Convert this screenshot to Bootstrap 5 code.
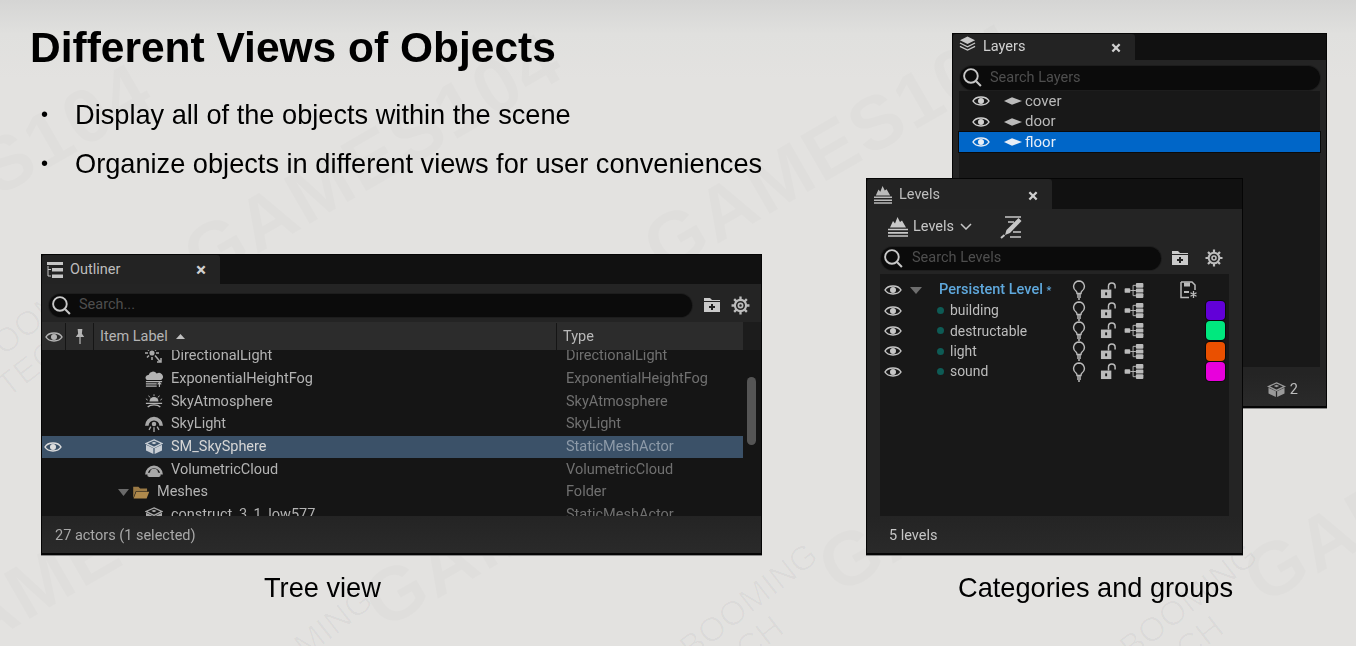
<!DOCTYPE html>
<html lang="en"><head><meta charset="utf-8"><title>Different Views of Objects</title>
<link rel="stylesheet" href="https://cdn.jsdelivr.net/npm/bootstrap@5.3.0/dist/css/bootstrap.min.css">
<style>
html,body{margin:0;height:100%;overflow:hidden}
body{background:#e3e2e0}
.slide{position:relative;width:1356px;height:646px;overflow:hidden;background:linear-gradient(#d5d5d4 0,#e0e0de 34px,#e3e2e0 80px);font-family:"Liberation Sans",Arial,sans-serif;color:#000}
.wm{position:absolute;font-weight:700;font-size:76px;line-height:1;color:rgba(0,0,0,.017);transform:rotate(-30deg);transform-origin:left center;white-space:nowrap;letter-spacing:2px}
.wm2{font-weight:400;font-size:34px;line-height:1.05;transform:rotate(-38deg);white-space:normal;width:200px;letter-spacing:0;color:rgba(0,0,0,.028)}
.ttl{position:relative;margin:0 0 0 30px;padding-top:23px;font-size:42.5px;line-height:50px;font-weight:700;filter:blur(.3px)}
.pts{position:relative;margin:17px 0 0;padding:0;list-style:none;font-size:27.2px;line-height:49px;filter:blur(.25px)}
.pts li{display:flex}
.pts i{font-style:normal;width:75px;padding-left:41px;flex:none;font-size:20px}
.cap{position:absolute;font-size:27.2px;line-height:32px;top:572px;white-space:nowrap;filter:blur(.25px)}
.win{position:absolute;background:#111;border:1px solid #050505;border-bottom-width:2px;box-shadow:0 1px 0 #8a8a8a;display:flex;flex-direction:column;font-family:Roboto,"Liberation Sans",sans-serif;color:#b9b9b9;font-size:14.5px;overflow:hidden}
.w-out{left:41px;top:254px;width:721px;height:301px}
.w-lay{left:952px;top:33px;width:375px;height:375px}
.w-lev{left:866px;top:178px;width:377px;height:377px}
.inner{filter:blur(.4px);display:flex;flex-direction:column;height:100%}
.tabbar{flex:none;display:flex;background:#111}
.tabcell{background:#232323;display:flex;align-items:center;border-radius:3px 3px 0 0;color:#bdbdbd}
.xx{margin-left:auto;color:#d0d0d0;font-size:19px;font-weight:700;line-height:1}
.bar{flex:none;background:#242424;display:flex;align-items:center}
.pill{background:#0b0b0b;border-radius:12px;height:23px;display:flex;align-items:center;color:#4e4e4e;box-shadow:0 0 0 1px #1d1d1d}
.hdr{flex:none;height:28px;background:#2c2c2c;width:701px;display:flex;align-items:stretch;color:#b5b5b5}
.hcell{display:flex;align-items:center;border-right:1px solid #151515}
.otree{flex:1 1 0;background:#151515;position:relative;overflow:hidden}
.orow{height:22.65px;display:flex;align-items:center;width:701px;color:#b3b3b3}
.orow.up{margin-top:-5px}
.orow .nm{width:524px;flex:none;display:flex;align-items:center;white-space:nowrap}
.orow .ty{color:#707070}
.orow.sel{background:#3b5168;color:#d6d6d6}
.orow.sel .ty{color:#8d9aa8}
.sbar{position:absolute;left:705px;top:27px;width:9px;height:68px;background:#555;border-radius:5px}
.foot{flex:none;background:linear-gradient(#242424,#2a2a2a);display:flex;align-items:center;color:#a8a8a8}
.lbody{background:#181818}
.lrow{height:20.4px;display:flex;align-items:center;position:relative}
.lrow.sel{background:#0066c8;color:#e6eef8;box-shadow:0 0 0 1px #0a0a0a}
.lname{font-size:13.9px;width:122px}
.dotg{width:7px;height:7px;border-radius:50%;background:#0e5b55;flex:none;margin:0 6px 0 35px}
.swt{width:19px;height:19px;border-radius:4px;flex:none;box-shadow:0 0 0 1px #0a0a0a;margin-left:62px}
.pl{color:#5fa8dc;font-weight:500;width:134px}
.ic{flex:none;display:block}
.e-lev{color:#c6c6c6;margin-left:4px}
.i-bulb{color:#bbb}
.i-lock{color:#bbb;margin-left:14px}
.i-hier{color:#bbb;margin-left:7px}
</style></head><body>
<svg width="0" height="0" class="position-absolute">
<defs>
<symbol id="eye" viewBox="0 0 18 14"><path d="M1 7C4 1.800 14 1.800 17 7C14 12.200 4 12.200 1 7Z" fill="none" stroke="currentColor" stroke-width="1.500"/><circle cx="9" cy="7" r="3" fill="currentColor"/></symbol>
<symbol id="search" viewBox="0 0 20 20"><circle cx="8.500" cy="8.500" r="6.500" fill="none" stroke="currentColor" stroke-width="1.800"/><path d="M13.500 13.500L18 18" stroke="currentColor" stroke-width="2"/></symbol>
<symbol id="fold" viewBox="0 0 18 16"><path d="M1 1h6l2 2h8v12H1z" fill="currentColor"/><path d="M1 4.500h16" stroke="#242424" stroke-width="1"/><path d="M9 7v6M6 10h6" stroke="#222" stroke-width="2"/></symbol>
<symbol id="gear" viewBox="0 0 18 18"><g fill="none" stroke="currentColor"><circle cx="9" cy="9" r="5.300" stroke-width="2"/><circle cx="9" cy="9" r="2" stroke-width="1.600"/><path d="M9 .5v3M9 14.500v3M.5 9h3M14.500 9h3M3 3l2.100 2.100M12.900 12.900L15 15M15 3l-2.100 2.100M5.100 12.900L3 15" stroke-width="2.200"/></g></symbol>
<symbol id="pin" viewBox="0 0 10 18"><path d="M2.500 1h5L7 6l2.500 3.500h-9L3 6z" fill="currentColor"/><path d="M5 9.500V17" stroke="currentColor" stroke-width="1.300"/></symbol>
<symbol id="outl" viewBox="0 0 18 18"><path d="M1 1h16v3H1zM6 7h11v3.500H6zM6 13.500h11V17H6z" fill="currentColor"/><path d="M2 5v10h3M2 8.500h3" fill="none" stroke="currentColor"/></symbol>
<symbol id="layers" viewBox="0 0 18 16"><path d="M9 0l8 4-8 4-8-4z" fill="currentColor"/><path d="M1 7l8 4 8-4M1 10.500l8 4 8-4" fill="none" stroke="currentColor" stroke-width="1.300"/></symbol>
<symbol id="lev" viewBox="0 0 22 20"><path d="M3 10.500L6 4l2 2.500L10.500 0 13 5l2-1.500 4 7z" fill="currentColor"/><path d="M1 12.500h20M1 15.800h20M1 19h20" stroke="currentColor" stroke-width="1.700"/></symbol>
<symbol id="edit" viewBox="0 0 24 24"><path d="M6 2h16M9 7h6M14 17h8M11 22h11" stroke="currentColor" stroke-width="1.500"/><path d="M19.500 3l3 3L11 18l-5 2 1.500-5z" fill="currentColor"/><path d="M2 23l3.500-3" stroke="currentColor" stroke-width="2"/></symbol>
<symbol id="diam" viewBox="0 0 18 8"><path d="M0 4L8 .3 18 4 8 7.700z" fill="currentColor"/></symbol>
<symbol id="bulb" viewBox="0 0 14 20"><path d="M7 1a5.500 5.500 0 0 0-3 10c.8.700 1 1.600 1 2.500h4c0-.9.200-1.800 1-2.500A5.500 5.500 0 0 0 7 1z" fill="none" stroke="currentColor" stroke-width="1.400"/><path d="M5 15h4M5 17h4M6 19h2" stroke="currentColor" stroke-width="1.300"/></symbol>
<symbol id="lock" viewBox="0 0 18 18"><path d="M1 8h11v9H1z" fill="currentColor"/><rect x="5.500" y="11" width="2" height="3" fill="#181818"/><path d="M9 8V4.500a3.500 3.500 0 0 1 7 0V7" fill="none" stroke="currentColor" stroke-width="1.600"/></symbol>
<symbol id="hier" viewBox="0 0 20 16"><rect x="0" y="5.500" width="6" height="5" rx="1" fill="currentColor"/><rect x="12" y="0" width="8" height="5" rx="1" fill="currentColor"/><rect x="12" y="5.800" width="8" height="4.400" rx="1" fill="currentColor"/><rect x="12" y="11" width="8" height="5" rx="1" fill="currentColor"/><path d="M6 8h6M9 2.500v11M9 2.500h3M9 13.500h3" stroke="currentColor" fill="none"/></symbol>
<symbol id="save" viewBox="0 0 18 18"><path d="M1 1h11l3 3v5M9 16.500H1V1" fill="none" stroke="currentColor" stroke-width="1.500"/><path d="M4 1.500h6v4H4zM4 10h5v2H4z" fill="currentColor"/><path d="M13.500 10v7M10.500 11.800l6 3.500M16.500 11.800l-6 3.500" stroke="currentColor" stroke-width="1.300"/></symbol>
<symbol id="cube" viewBox="0 0 20 18"><path d="M10 1l9 4-9 4.500L1 5z" fill="none" stroke="currentColor" stroke-width="1.500"/><path d="M1 6.500l8.300 4V17L1 13zM19 6.500l-8.300 4V17L19 13z" fill="currentColor"/><path d="M7 4.500l3-1.500 3 1.500-3 1.500z" fill="currentColor"/></symbol>
<symbol id="dlight" viewBox="0 0 20 18"><g stroke="currentColor" stroke-width="1.500" fill="none"><circle cx="9" cy="6" r="1.800" fill="currentColor"/><path d="M9 0v2M9 10v3M2 6h3M13 6h3M4 1.500l2 2M14 1.500l-2 2M6 8.500l-2 2M12 8.500l5 6M18 11v4h-4"/></g></symbol>
<symbol id="fog" viewBox="0 0 20 20"><path d="M2 11a3 3 0 0 1 2-5.500 5 5 0 0 1 9-1.500 4 4 0 0 1 5 7z" fill="currentColor"/><path d="M1 13h18M1 15.500h12M1 18h12" stroke="currentColor" stroke-width="1.300"/><path d="M16 19v-5M14 16l2-2 2 2" stroke="currentColor" fill="none" stroke-width="1.300"/></symbol>
<symbol id="atm" viewBox="0 0 20 16"><path d="M5 8a5 5 0 0 1 10 0z" fill="currentColor"/><path d="M10 0v2M4 1.500l1.500 2M16 1.500l-1.500 2M1 5l2 1.500M19 5l-2 1.500" stroke="currentColor"/><path d="M1 10h18M3 14c3-3 11-3 14 0" fill="none" stroke="currentColor" stroke-width="1.500"/></symbol>
<symbol id="sky" viewBox="0 0 20 20"><path d="M0 12a10 10 0 0 1 20 0h-4a6 6 0 0 0-12 0z" fill="currentColor"/><circle cx="10" cy="10" r="2.500" fill="currentColor"/><path d="M10 13.500V19M6.500 13l-2 3.500M13.500 13l2 3.500" stroke="currentColor" stroke-width="1.500"/></symbol>
<symbol id="cloud" viewBox="0 0 20 18"><path d="M0 14a10 10 0 0 1 20 0h-3a7 7 0 0 0-14 0z" fill="currentColor"/><path d="M4.500 17a2.500 2.500 0 0 1 1-5 4.500 4.500 0 0 1 9 0 2.500 2.500 0 0 1 1 5z" fill="currentColor"/></symbol>
<symbol id="folder" viewBox="0 0 20 15"><path d="M1 1h6l2 2h8v3H4L1 14z" fill="#9b7a45"/><path d="M4.500 6.500H19.500l-3 8H1.500z" fill="#b08a4c"/></symbol>
</defs></svg>
<div class="slide">
<span class="wm" style="left:-220px;top:255px">GAMES104</span>
<span class="wm" style="left:190px;top:225px">GAMES104</span>
<span class="wm" style="left:650px;top:215px">GAMES104</span>
<span class="wm" style="left:-90px;top:620px">GAMES104</span>
<span class="wm" style="left:370px;top:570px">GAMES104</span>
<span class="wm" style="left:825px;top:535px">GAMES104</span>
<span class="wm" style="left:1250px;top:545px">GAMES104</span>
<span class="wm wm2" style="left:250px;top:675px">BOOMING TECH</span>
<span class="wm wm2" style="left:695px;top:630px">BOOMING TECH</span>
<span class="wm wm2" style="left:1135px;top:630px">BOOMING TECH</span>
<span class="wm wm2" style="left:-10px;top:340px">BOOMING TECH</span>
<h1 class="ttl">Different Views of Objects</h1>
<ul class="pts"><li><i>•</i>Display all of the objects within the scene</li><li><i>•</i>Organize objects in different views for user conveniences</li></ul>

<section class="win w-out"><div class="inner">
 <div class="tabbar" style="height:29px"><div class="tabcell" style="width:178px;padding:0 14px 0 4px"><svg class="ic" width="18" height="18" style="color:#c6c6c6;margin-right:6px"><use href="#outl"/></svg>Outliner<span class="xx">×</span></div></div>
 <div class="bar" style="height:38px;padding-left:7px;padding-top:4px"><div class="pill" style="width:643px;padding-left:2px"><svg class="ic" width="21" height="21" style="color:#c8c8c8"><use href="#search"/></svg><span style="margin-left:7px">Search...</span></div>
  <svg class="ic" width="18" height="16" style="color:#cbcbcb;margin-left:11px"><use href="#fold"/></svg><svg class="ic" width="19" height="19" style="color:#bdbdbd;margin-left:10px"><use href="#gear"/></svg></div>
 <div class="bar" style="height:28px;background:#1c1c1c;align-items:stretch"><div class="hdr" style="padding-top:1px">
  <div class="hcell justify-content-center" style="width:24px;color:#b5b5b5"><svg class="ic" width="18" height="14"><use href="#eye"/></svg></div>
  <div class="hcell justify-content-center" style="width:28px"><svg class="ic" width="10" height="17"><use href="#pin"/></svg></div>
  <div class="hcell" style="width:463px;padding-left:6px">Item Label<svg class="ic ms-2" width="9" height="5" viewBox="0 0 9 5"><path d="M4.500 0L9 5H0z" fill="#c0c0c0"/></svg></div>
  <div class="d-flex align-items-center" style="padding-left:6px;color:#b9b9b9">Type</div></div></div>
 <div class="otree">
  <div class="orow up"><div class="nm" style="padding-left:101px"><svg class="ic me-2" width="20" height="18" style="color:#aaa"><use href="#dlight"/></svg>DirectionalLight</div><div class="ty">DirectionalLight</div></div>
  <div class="orow"><div class="nm" style="padding-left:103px"><svg class="ic" width="18" height="18" style="color:#b3b3b3;margin-right:8px"><use href="#fog"/></svg>ExponentialHeightFog</div><div class="ty">ExponentialHeightFog</div></div>
  <div class="orow"><div class="nm" style="padding-left:103px"><svg class="ic" width="18" height="15" style="color:#b3b3b3;margin-right:8px"><use href="#atm"/></svg>SkyAtmosphere</div><div class="ty">SkyAtmosphere</div></div>
  <div class="orow"><div class="nm" style="padding-left:103px"><svg class="ic" width="18" height="18" style="color:#a8a8a8;margin-right:8px"><use href="#sky"/></svg>SkyLight</div><div class="ty">SkyLight</div></div>
  <div class="orow sel"><div class="nm" style="padding-left:2px"><svg class="ic" width="18" height="14" style="color:#ddd;margin-right:83px"><use href="#eye"/></svg><svg class="ic" width="18" height="16" style="color:#c8ced5;margin-right:8px"><use href="#cube"/></svg>SM_SkySphere</div><div class="ty">StaticMeshActor</div></div>
  <div class="orow"><div class="nm" style="padding-left:103px"><svg class="ic" width="18" height="16" style="color:#a8a8a8;margin-right:8px"><use href="#cloud"/></svg>VolumetricCloud</div><div class="ty">VolumetricCloud</div></div>
  <div class="orow"><div class="nm" style="padding-left:76px"><svg class="ic" width="11" height="7" viewBox="0 0 11 7" style="margin-right:3px"><path d="M0 0h11L5.500 7z" fill="#6a6a6a"/></svg><svg class="ic" width="18" height="13" style="margin-right:7px"><use href="#folder"/></svg>Meshes</div><div class="ty">Folder</div></div>
  <div class="orow"><div class="nm" style="padding-left:103px"><svg class="ic" width="18" height="16" style="color:#a8a8a8;margin-right:8px"><use href="#cube"/></svg>construct_3_1_low577</div><div class="ty">StaticMeshActor</div></div>
  <div class="sbar"></div>
 </div>
 <div class="foot" style="height:37px;padding-left:13px;padding-top:2px">27 actors (1 selected)</div>
</div></section>

<section class="win w-lay" style="z-index:1"><div class="inner">
 <div class="tabbar" style="height:26px"><div class="tabcell" style="width:182px;padding:0 14px 0 6px"><svg class="ic" width="17" height="16" style="color:#c8c8c8;margin-top:-6px;margin-right:7px"><use href="#layers"/></svg><span style="color:#d0d0d0;margin-top:-1px">Layers</span><span class="xx">×</span></div></div>
 <div class="bar" style="height:37px;padding-left:7px;padding-bottom:2px"><div class="pill" style="width:360px;padding-left:2px;height:24px"><svg class="ic" width="21" height="21" style="color:#c8c8c8"><use href="#search"/></svg><span style="margin-left:7px">Search Layers</span></div></div>
 <div class="flex-grow-1" style="background:#242424;padding:0 6px"><div class="lbody h-100" style="margin-top:-6px">
  <div class="lrow"><svg class="ic" width="18" height="14" style="color:#d0d0d0;margin-left:13px;margin-right:14px"><use href="#eye"/></svg><svg class="ic" width="18" height="8" style="color:#bbb;margin-right:3px"><use href="#diam"/></svg><span style="font-size:15px">cover</span></div>
  <div class="lrow"><svg class="ic" width="18" height="14" style="color:#d0d0d0;margin-left:13px;margin-right:14px"><use href="#eye"/></svg><svg class="ic" width="18" height="8" style="color:#bbb;margin-right:3px"><use href="#diam"/></svg><span style="font-size:15px">door</span></div>
  <div class="lrow sel"><svg class="ic" width="18" height="14" style="color:#e8eef6;margin-left:13px;margin-right:14px"><use href="#eye"/></svg><svg class="ic" width="18" height="8" style="color:#e8eef6;margin-right:3px"><use href="#diam"/></svg><span style="font-size:15px">floor</span></div>
 </div></div>
 <div class="foot justify-content-end" style="height:33px;padding-right:28px;color:#bdbdbd"><svg class="ic me-1" width="19" height="16" style="color:#999"><use href="#cube"/></svg>2</div>
</div></section>

<section class="win w-lev" style="z-index:2"><div class="inner">
 <div class="tabbar" style="height:30px"><div class="tabcell" style="width:185px;padding:2px 14px 0 6px"><svg class="ic" width="20" height="18" style="color:#bbb;margin-right:6px"><use href="#lev"/></svg>Levels<span class="xx">×</span></div></div>
 <div class="bar" style="height:35px;padding-left:20px;color:#c6c6c6"><svg class="ic" width="22" height="20" style="color:#c8c8c8;margin-right:4px"><use href="#lev"/></svg>Levels<svg class="ic" width="12" height="7" viewBox="0 0 12 7" style="margin-left:6px"><path d="M1 1l5 5 5-5" fill="none" stroke="#c6c6c6" stroke-width="1.500"/></svg><svg class="ic" width="24" height="24" style="color:#c6c6c6;margin-left:27px"><use href="#edit"/></svg></div>
 <div class="bar" style="height:30px;padding-left:14px;padding-bottom:2px"><div class="pill" style="width:280px;padding-left:2px"><svg class="ic" width="21" height="21" style="color:#c8c8c8"><use href="#search"/></svg><span style="margin-left:8px">Search Levels</span></div>
  <svg class="ic" width="18" height="16" style="color:#cbcbcb;margin-left:10px"><use href="#fold"/></svg><svg class="ic" width="18" height="18" style="color:#bdbdbd;margin-left:16px"><use href="#gear"/></svg></div>
 <div class="flex-grow-1 d-flex" style="background:#242424;padding:0 13px"><div class="lbody flex-grow-1" style="padding-top:6px;color:#bdbdbd">
  <div class="lrow"><svg class="ic e-lev" width="18" height="14"><use href="#eye"/></svg><svg class="ic" width="12" height="7" viewBox="0 0 12 7" style="margin:0 17px 0 8px"><path d="M0 0h12L6 7z" fill="#6e6e6e"/></svg><span class="pl">Persistent Level <small style="font-size:11px">*</small></span><svg class="ic i-bulb" width="14" height="20" style="margin-left:-1px"><use href="#bulb"/></svg><svg class="ic i-lock" width="17" height="17"><use href="#lock"/></svg><svg class="ic i-hier" width="20" height="15"><use href="#hier"/></svg><svg class="ic" width="18" height="18" style="color:#bbb;margin-left:36px"><use href="#save"/></svg></div>
  <div class="lrow"><svg class="ic e-lev" width="18" height="14"><use href="#eye"/></svg><i class="dotg"></i><span class="lname">building</span><svg class="ic i-bulb" width="14" height="20"><use href="#bulb"/></svg><svg class="ic i-lock" width="17" height="17"><use href="#lock"/></svg><svg class="ic i-hier" width="20" height="15"><use href="#hier"/></svg><i class="swt" style="background:#6200d8"></i></div>
  <div class="lrow"><svg class="ic e-lev" width="18" height="14"><use href="#eye"/></svg><i class="dotg"></i><span class="lname">destructable</span><svg class="ic i-bulb" width="14" height="20"><use href="#bulb"/></svg><svg class="ic i-lock" width="17" height="17"><use href="#lock"/></svg><svg class="ic i-hier" width="20" height="15"><use href="#hier"/></svg><i class="swt" style="background:#00e87e"></i></div>
  <div class="lrow"><svg class="ic e-lev" width="18" height="14"><use href="#eye"/></svg><i class="dotg"></i><span class="lname">light</span><svg class="ic i-bulb" width="14" height="20"><use href="#bulb"/></svg><svg class="ic i-lock" width="17" height="17"><use href="#lock"/></svg><svg class="ic i-hier" width="20" height="15"><use href="#hier"/></svg><i class="swt" style="background:#ea5000"></i></div>
  <div class="lrow"><svg class="ic e-lev" width="18" height="14"><use href="#eye"/></svg><i class="dotg"></i><span class="lname">sound</span><svg class="ic i-bulb" width="14" height="20"><use href="#bulb"/></svg><svg class="ic i-lock" width="17" height="17"><use href="#lock"/></svg><svg class="ic i-hier" width="20" height="15"><use href="#hier"/></svg><i class="swt" style="background:#e800dc"></i></div>
 </div></div>
 <div class="foot" style="height:37px;padding-left:22px;padding-top:2px;color:#c6c6c6">5 levels</div>
</div></section>

<div class="cap" style="left:264px">Tree view</div>
<div class="cap" style="left:958px">Categories and groups</div>
</div>
<script src="https://cdn.jsdelivr.net/npm/bootstrap@5.3.0/dist/js/bootstrap.bundle.min.js"></script>
</body></html>
